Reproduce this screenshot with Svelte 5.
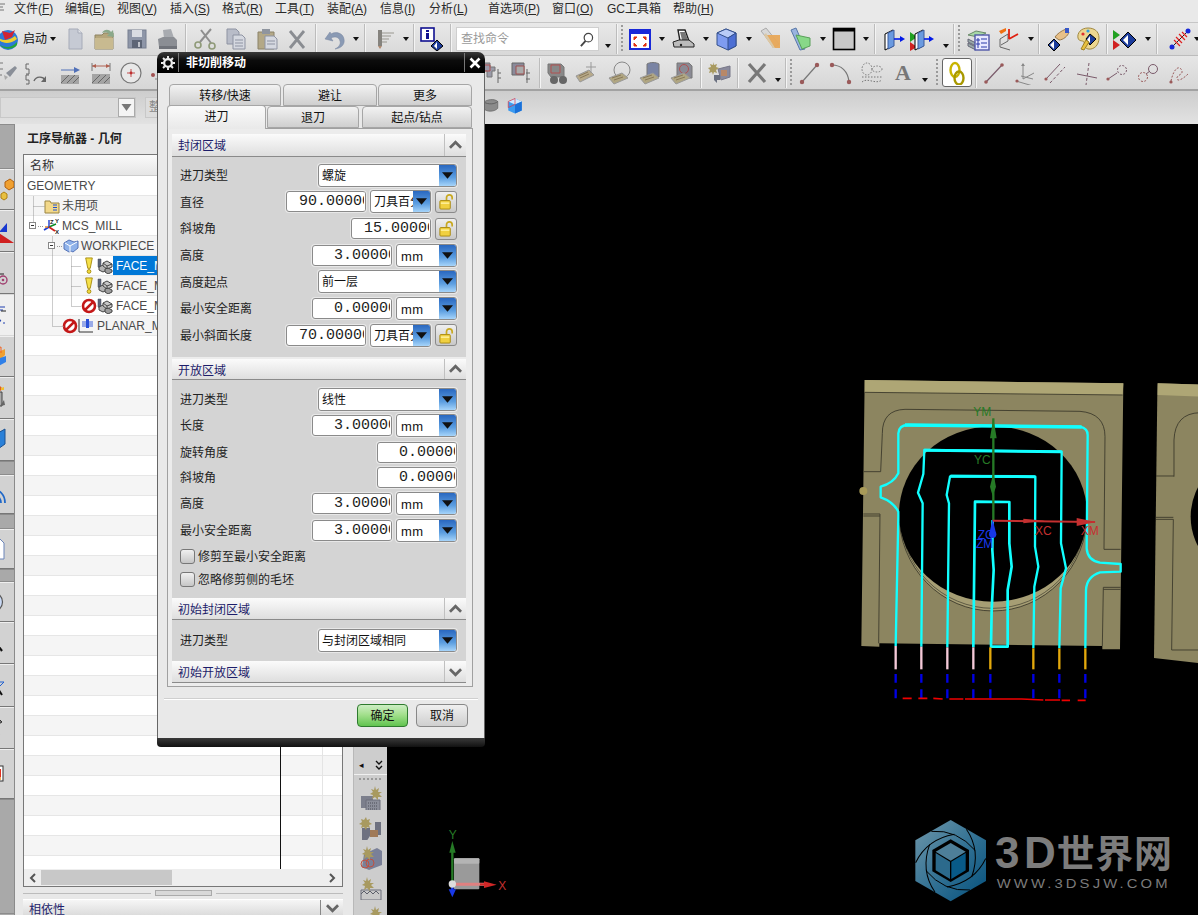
<script>
  const ICONS = {
    logo: `<circle cx="12" cy="13" r="10" fill="#2b78d8"/><path d="M4 18c5 3 12 3 17-3v3c-4 5-13 5-17 0z" fill="#25a53a"/><path d="M6 4l8 2 5-3-3 7-7 3z" fill="#d02434"/><path d="M3 11c4 3 10 3 16-2l2 3c-6 5-14 5-18 1z" fill="#efd030"/>`,
    doc: `<path d="M6 2h9l4 4v16H6z" fill="#c6cad4" stroke="#a6abb8"/><path d="M15 2v4h4" fill="#e2e4ea" stroke="#a6abb8"/>`,
    folder: `<path d="M2 8h7l2-2h9v16H2z" fill="#b5a67c" stroke="#8e8360"/><path d="M2 11h18v11H2z" fill="#c8ba90"/><path d="M9 6c2-4 7-4 9-1l2-2 1 7-7-1 2-2c-2-2-4-2-7-1z" fill="#8aa88a"/>`,
    save: `<rect x="4" y="3" width="18" height="18" fill="#8e96a8" stroke="#777f90"/><rect x="8" y="3" width="10" height="7" fill="#d9dce2"/><rect x="8" y="13" width="10" height="8" fill="#5d6576"/><rect x="14" y="15" width="2" height="5" fill="#c0c4cc"/>`,
    print: `<path d="M8 3l8-1 3 9H9z" fill="#a8abb0"/><path d="M3 12l5-2h11l3 3v7H4z" fill="#8b8e94"/><path d="M4 19h18v3H4z" fill="#70737a"/>`,
    scissors: `<path d="M19 2L8 15M9 3l10 13" stroke="#8e8e8e" stroke-width="2" fill="none"/><circle cx="6" cy="18" r="3" fill="none" stroke="#8f9a78" stroke-width="1.6"/><circle cx="20" cy="19" r="3" fill="none" stroke="#8f9a78" stroke-width="1.6"/>`,
    copy: `<path d="M4 2h9l3 3v12H4z" fill="#b8bcc8" stroke="#8e93a2"/><path d="M10 8h9l3 3v11H10z" fill="#d5d8e0" stroke="#8e93a2"/><path d="M12 13h8M12 16h8M12 19h8" stroke="#8e93a2"/>`,
    paste: `<path d="M3 5h16v17H3z" fill="#b3a887" stroke="#8b8268"/><rect x="7" y="2" width="8" height="5" fill="#8f959f"/><path d="M10 9h9l3 3v10H10z" fill="#d5d8e0" stroke="#8e93a2"/><path d="M12 14h8M12 17h8" stroke="#8e93a2"/>`,
    xmark: `<path d="M5 4l14 17M19 4L5 21" stroke="#8a8d92" stroke-width="2.8" fill="none"/>`,
    undo: `<path d="M8 5L3 12l8 2-2-3c4-2 8-1 9 3 1 3-1 6-5 8 7-1 10-5 9-10-1-6-8-8-13-5z" fill="#8a9ab4" stroke="#76859e" stroke-width=".5"/>`,
    filter: `<path d="M6 3h4v16H6z" fill="#85837e"/><path d="M10 6h12M10 9l9 0M10 12h7M10 15h5" stroke="#9a9890" stroke-width="1.2"/><path d="M6 19l2 3 2-3z" fill="#b08a70"/>`,
    info: `<rect x="1" y="1" width="13" height="13" fill="#fff" stroke="#101090" stroke-width="1.6"/><path d="M6 3h3v2H6zM6 6h3v6H6z" fill="#101090"/><path d="M17 13l6 6-6 5-6-5z" fill="#1c3c9c" stroke="#000"/><path d="M17 15v7l-3-3z" fill="#fff"/>`,
    fit: `<rect x="2" y="3" width="20" height="19" fill="#fff" stroke="#1828d8" stroke-width="2"/><rect x="2" y="3" width="20" height="4" fill="#1828d8"/><path d="M6 10h3l-3 3zM18 10h-3l3 3zM6 19h3l-3-3zM18 19h-3l3-3z" fill="#e03010" stroke="#e03010"/>`,
    scan: `<path d="M7 3h7l4 11H9z" fill="#fff" stroke="#222" stroke-width="1.4"/><path d="M9 5h5l3 8H11z" fill="#777"/><path d="M2 15l6-2h10l5 4v3H3z" fill="#bbb" stroke="#222"/><circle cx="10" cy="18" r="1.2" fill="#222"/>`,
    cube: `<path d="M12 2l10 4v13l-8 4-11-5V6z" fill="#7f9cf0" stroke="#34508c"/><path d="M3 6l11 5 8-5-10-4z" fill="#b9cbf7" stroke="#34508c"/><path d="M14 11v12l8-4V6z" fill="#4d6fd4" stroke="#34508c"/>`,
    planeO: `<path d="M3 4l5-3 13 16-5 3z" fill="#d8d8d8" stroke="#aaa"/><path d="M6 8h16v13H15z" fill="#e8a858" opacity=".95"/><path d="M6 8l9 13h2L8 6z" fill="#d9c8a8"/>`,
    planeG: `<path d="M2 3l5-2 9 21-5 1z" fill="#9ab4e0" stroke="#5878a8"/><path d="M7 8l14 3v8l-8 3z" fill="#88d888" stroke="#58a058"/>`,
    blackrect: `<rect x="1.5" y="1.5" width="21" height="21" fill="#c8c8c8" stroke="#000" stroke-width="1.6"/><rect x="1.5" y="1.5" width="21" height="3" fill="#000"/>`,
    panelB: `<path d="M3 7l8-4v16l-8 4z" fill="#fff" stroke="#000"/><path d="M6 6l6-3v16l-6 3z" fill="#6a9ae0" stroke="#3a5a9a"/><path d="M12 12h9" stroke="#0018e8" stroke-width="1.6"/><path d="M18 9l5 3-5 3z" fill="#0018e8"/>`,
    panelT: `<path d="M0 5l7 5-7 5z" fill="#20a020"/><path d="M0 15l7 5-7 4z" fill="#d02020"/><path d="M5 7l8-4v16l-8 4z" fill="#fff" stroke="#000"/><path d="M8 6l6-3v16l-6 3z" fill="#6a9ae0" stroke="#3a5a9a"/><path d="M14 12h7" stroke="#0018e8" stroke-width="1.6"/><path d="M19 9l5 3-5 3z" fill="#0018e8"/>`,
    stack: `<path d="M2 8l8-4 10 2-8 4z" fill="#a8d8a8" stroke="#6a8a6a"/><path d="M2 12v3l8 4v-3zM2 16v3l8 4v-3z" fill="#9aa" stroke="#667"/><rect x="9" y="8" width="14" height="15" fill="#e8e8ff" stroke="#5058a8" stroke-width="1.4"/><path d="M11 12h2v2h-2zM15 12h6M11 16h2v2h-2zM15 16h6M11 20h2M15 20h6" stroke="#2838a8" fill="none"/>`,
    wcs: `<path d="M12 7l-8 5 0 8M12 7v7l-7 4" stroke="#666" fill="none"/><path d="M4 20l10 3" stroke="#666"/><path d="M13 12V2M13 12l9-5" stroke="#e02010" stroke-width="1.8" fill="none"/><path d="M3 4l7-3v3l-5 3z" fill="#f07010"/>`,
    hand: `<path d="M9 10c2-3 6-6 11-8l3 3c-1 4-6 8-10 8z" fill="#e8c088" stroke="#98784a"/><rect x="19" y="1" width="4" height="5" fill="#3858c8"/><path d="M8 12l6 6-6 6-6-6z" fill="#1c3c9c" stroke="#000"/><path d="M8 14v8l-4-4z" fill="#fff"/>`,
    palette: `<path d="M12 1C5 1 1 6 2 11c1 4 5 2 6 4 1 3 0 6 4 7 6 1 11-4 11-11S18 1 12 1z" fill="#ecd690" stroke="#a08840"/><circle cx="7" cy="7" r="1.6" fill="#e03030"/><circle cx="12" cy="4" r="1.6" fill="#30a0e0"/><path d="M14 7l6 5-6 6-4-6z" fill="#1c3c9c" stroke="#000"/><path d="M14 9v7l-3-3z" fill="#fff"/><path d="M5 22l5-9 3 2-5 8z" fill="#e8c040" stroke="#a08020"/>`,
    tridiam: `<path d="M0 3l7 5-7 5z" fill="#20a020"/><path d="M0 13l7 5-7 5z" fill="#d02020"/><path d="M15 5l8 8-8 8-8-8z" fill="#1c3c9c" stroke="#000"/><path d="M15 8v10l-5-5z" fill="#fff"/>`,
    hatch: `<path d="M3 21L21 3" stroke="#222"/><path d="M8 10l6 6M11 7l6 6M6 13l6 6M14 5l5 5" stroke="#e02020" stroke-width="1.2"/><circle cx="4" cy="20" r="2.5" fill="#1828d8"/><circle cx="20" cy="4" r="2.5" fill="#1828d8"/>`,
    sk0: `<path d="M1 2h6M1 8h6M1 14h5" stroke="#777" fill="none"/><path d="M10 12l9-7 2 2-7 9z" fill="#8a8f98"/><path d="M8 14l4 2-3 3z" fill="#aaa"/>`,
    sk1: `<path d="M4 3H1v5h3v5H1M4 14H1v5h3v4H1" stroke="#666" fill="none"/><path d="M9 20c2-5 9-5 11-1" stroke="#666" fill="none" stroke-width="1.4"/><path d="M21 15v6h-5z" fill="#666"/>`,
    hatchA: `<path d="M3 14h18v9H3z" fill="#a4a4a4"/><path d="M3 22l8-8M9 22l8-8M15 22l6-6" stroke="#666"/><path d="M3 9h14" stroke="#5070b8"/><path d="M16 6l6 3-6 3z" fill="#5070b8"/>`,
    hatchD: `<path d="M3 13h18v10H3z" fill="#a4a4a4"/><path d="M3 22l8-8M9 22l8-8M15 22l6-6" stroke="#666"/><path d="M3 5h18" stroke="#b06050"/><path d="M3 2v8M21 2v8" stroke="#777"/><path d="M3 5l4-2v4zM21 5l-4-2v4z" fill="#b06050"/>`,
    circleD: `<circle cx="12" cy="12" r="10" fill="#e8e8e8" stroke="#777" stroke-width="1.2"/><path d="M12 8v8M8 12h8" stroke="#c05050"/><circle cx="12" cy="12" r="1.4" fill="#c03030"/>`,
    redDot: `<circle cx="6" cy="14" r="2" fill="#a05050"/><path d="M8 18h8" stroke="#888"/>`,
    boxT: `<path d="M3 2h8v4h5v4h-3v6H8v-6H3z" fill="#9a9aa8" stroke="#777"/><path d="M5 4h6v6H5z" fill="none" stroke="#b05050"/><path d="M19 12h3M19 17h3M19 8v14" stroke="#666"/>`,
    box2: `<path d="M4 2h12v12H4z" fill="#8a8a9a" stroke="#666"/><path d="M8 5h8v8H8z" fill="#aaa" stroke="#a05050"/><path d="M18 12h4M18 18h4M19 8v14" stroke="#666"/>`,
    binoc: `<path d="M3 3h13l3 3v10H6L3 12z" fill="#888" stroke="#777"/><path d="M6 4h9v8H6z" fill="none" stroke="#b05050"/><circle cx="9" cy="19" r="4" fill="#666"/><circle cx="18" cy="19" r="4" fill="#666"/>`,
    plusTag: `<path d="M3 15l13-6 5 5-14 7z" fill="#b8aa8a" stroke="#999"/><path d="M6 15l9-4M7 17l9-4" stroke="#8a7a5a"/><path d="M18 1v11M13 6h10" stroke="#999"/>`,
    circTag: `<circle cx="15" cy="9" r="8" fill="none" stroke="#888"/><path d="M2 17l13-5 6 5-14 6z" fill="#b0a682" stroke="#999"/><path d="M5 17l9-3M7 19l9-3" stroke="#8a7a5a"/>`,
    cylTag: `<path d="M9 3c3-2 9-2 12 0v13H9z" fill="#7a84a4" stroke="#777"/><path d="M2 17l13-5 6 5-14 6z" fill="#b0a682" stroke="#999"/><path d="M5 17l9-3M7 19l9-3" stroke="#8a7a5a"/>`,
    boxTag: `<path d="M8 2h12l3 3v12H8z" fill="#8a8a94" stroke="#777"/><circle cx="15" cy="8" r="4.5" fill="none" stroke="#b05050"/><path d="M2 17l13-5 6 5-14 6z" fill="#b0a682" stroke="#999"/><path d="M5 17l9-3M7 19l9-3" stroke="#8a7a5a"/>`,
    star: `<path d="M10 8l12-3v11l-9 3z" fill="#8a8a9c" stroke="#778"/><rect x="13" y="9" width="6" height="6" fill="#b88868"/><path d="M5 1l1 3 3-1-1 3 3 1-3 2 1 3-3-1-1 3-1-3-3 1 1-3-2-2 3-1-1-3 3 1z" fill="#a89a60"/><path d="M6 14h6v5H9v3L6 19z" fill="#6a7080"/>`,
    xgray: `<path d="M4 3l16 18M20 3L4 21" stroke="#787878" stroke-width="3.2" fill="none"/>`,
    line: `<path d="M4 21L19 4" stroke="#777" stroke-width="1.2"/><circle cx="4" cy="21" r="2.2" fill="#9a5a5a"/><circle cx="19" cy="4" r="2.2" fill="#9a5a5a"/>`,
    arc: `<path d="M3 4c9 0 16 6 17 17" stroke="#777" stroke-width="1.2" fill="none"/><circle cx="3" cy="4" r="2.2" fill="#9a5a5a"/><circle cx="20" cy="21" r="2.2" fill="#9a5a5a"/>`,
    shapes: `<ellipse cx="7" cy="8" rx="5" ry="6" fill="none" stroke="#777" stroke-dasharray="1.5 1.5"/><ellipse cx="17" cy="8" rx="5" ry="3" fill="none" stroke="#777" stroke-dasharray="1.5 1.5"/><path d="M2 16h20M2 21c6-5 13 3 20-2" stroke="#777" stroke-dasharray="1.5 1.5" fill="none"/>`,
    link: `<ellipse cx="10" cy="9" rx="4.5" ry="7" fill="none" stroke="#c8b400" stroke-width="2.4"/><ellipse cx="14" cy="17" rx="4.5" ry="6.5" fill="none" stroke="#a89800" stroke-width="2.4"/>`,
    l1: `<path d="M4 21L20 4" stroke="#7a5a6a" stroke-width="1.2"/><circle cx="4" cy="21" r="1.8" fill="#9a5a5a"/><circle cx="20" cy="4" r="1.8" fill="#9a5a5a"/>`,
    axes: `<path d="M10 18V3M10 18l11-6M3 20l17 5M8 15l12 3" stroke="#888" fill="none"/><path d="M8 5l2-3 2 3z" fill="#888"/><circle cx="4" cy="20" r="1.6" fill="#9a5a5a"/>`,
    dbl: `<path d="M3 18L17 3" stroke="#7a5a6a"/><path d="M7 22L22 6" stroke="#7a5a6a" stroke-dasharray="3 2"/><circle cx="3" cy="18" r="1.6" fill="#9a5a5a"/>`,
    cross: `<path d="M2 13l20 4" stroke="#7a5a6a"/><path d="M14 2l-3 22" stroke="#7a5a6a" stroke-dasharray="3 2"/>`,
    lc: `<path d="M3 18l9-6" stroke="#7a5a6a"/><circle cx="3" cy="18" r="1.6" fill="#9a5a5a"/><circle cx="17" cy="9" r="4.5" fill="none" stroke="#7a5a6a" stroke-dasharray="2 1.5"/>`,
    cc: `<circle cx="7" cy="16" r="4.5" fill="none" stroke="#9a5a5a" stroke-dasharray="2 1.5"/><circle cx="17" cy="8" r="4.5" fill="none" stroke="#7a5a6a"/><path d="M10 13l4-3" stroke="#7a5a6a"/>`,
    sc: `<path d="M4 20c3-14 9-16 11-10 1 4-6 4-5 8 1 3 7-1 11-5" fill="none" stroke="#9a5a5a" stroke-dasharray="2 1.5"/><circle cx="4" cy="21" r="1.6" fill="#9a5a5a"/>`,
    gray3d: `<path d="M3 7c3-4 14-5 18-1v9c-4 5-15 5-18 1z" fill="#8b8b8b" stroke="#666"/><path d="M3 7c5 3 14 3 18-1" fill="none" stroke="#555"/>`,
    blueCube: `<path d="M3 6l9-4 9 4v12l-9 4-9-4z" fill="#3a9af0"/><path d="M3 6l9 4 9-4-9-4z" fill="#cfe8ff"/><path d="M12 10v12l9-4V6z" fill="#1a70d8"/><path d="M3 6l9-4v8l-9 4z" fill="none" stroke="#e03040" stroke-width=".9"/>`,
    rCube: `<path d="M14 4l5-3 4 3v5l-5 3-4-3z" fill="#f0a030" stroke="#b06010"/><path d="M10 16l3-2 3 2v4l-3 2-3-2z" fill="#e8c040" stroke="#b08010"/><path d="M0 22h8" stroke="#222"/>`,
    rTri: `<path d="M16 4L8 13h8z" fill="#1838d0"/><path d="M8 14l15 10H8z" fill="#d02020"/>`,
    rMag: `<path d="M0 2h3v12H0z" fill="#a03060"/><circle cx="12" cy="19" r="4" fill="none" stroke="#a04070" stroke-width="1.4"/><circle cx="12" cy="19" r="1.3" fill="#a04070"/><path d="M5 13h8" stroke="#222"/>`,
    rLines: `<path d="M5 4h9M3 7h9" stroke="#2040b0"/><path d="M6 13l4 5H5zM12 20h2" stroke="#2040b0" fill="none"/><path d="M10 8h5" stroke="#222"/>`,
    rOrange: `<path d="M0 10l14-6v6L0 24z" fill="#f0a030"/><path d="M0 16l15-5v6L2 24z" fill="#3080e8"/><path d="M0 5l10-3v6" fill="none" stroke="#f06020"/>`,
    rTool: `<path d="M3 6h8v14H3z" fill="#aaa" stroke="#444"/><path d="M9 20l4-6 1 5z" fill="#666"/><path d="M5 2l4-2 3 3-3 2z" fill="#e06020"/><path d="M10 2l3-1v3h-3z" fill="#f0c030"/>`,
    rBook: `<path d="M0 4h3v16H0z" fill="#28a028"/><path d="M4 4h3v16H4z" fill="#e8c030"/><path d="M7 5l7-4v15l-7 5z" fill="#2a80d8" stroke="#1a5090"/>`,
    rWifi: `<path d="M0 19c3 0 6-2 6-6M0 11c6 0 10 4 10 9M0 6c9 0 14 6 14 14" fill="none" stroke="#2068c8" stroke-width="1.8"/><circle cx="0" cy="19" r="5" fill="#1878e0"/>`,
    rGlobe: `<path d="M0 1h8l5 5v16H0z" fill="#fff" stroke="#6a84b8"/><circle cx="4" cy="15" r="4.5" fill="#30a060"/><path d="M1 12h5v3H2z" fill="#1878c8"/>`,
    rClock: `<circle cx="2" cy="12" r="9.5" fill="#c8d8f4" stroke="#555" stroke-width="1.2"/><path d="M2 6v6h5" stroke="#000" stroke-width="1.4" fill="none"/>`,
    rWand: `<path d="M3 9l8 11" stroke="#111" stroke-width="2.2"/><circle cx="2" cy="7" r="2.4" fill="#fff"/>`,
    rWand2: `<path d="M2 8h11l-4 4" stroke="#2060d0" fill="none"/><path d="M4 10l7 11" stroke="#111" stroke-width="2"/><circle cx="2" cy="8" r="2.4" fill="#fff"/>`,
    rHammer: `<path d="M0 6l9-2 2 2-5 3 1 8c2 1 2 3 0 3l-7 0" fill="#777" stroke="#333"/>`,
    rRed: `<rect x="-2" y="4" width="14" height="15" fill="#fff" stroke="#333"/><path d="M0 7h10v9H0z" fill="#e03020"/><path d="M3 7h4v7H3z" fill="#4090e0"/><path d="M0 15h10v3H0z" fill="#f0b060"/>`,
    rGear: `<circle cx="2" cy="11" r="5" fill="none" stroke="#222" stroke-width="2.5"/>`,
    sNoise: `<path d="M2 10h12v12H2z" fill="#7c7f8c"/><path d="M7 14h14v11H7z" fill="#8b8e9a" stroke="#6c6f7a"/><path d="M9 17h10M9 20h10M9 23h10" stroke="#4c4f58" stroke-dasharray="1 1"/><path d="M16 0l1 4 3-2-1 4 4 0-3 2 3 3-4 0 0 3-3-3-3 2 1-4-3-1 3-2-2-3 3 1z" fill="#a89a60"/>`,
    sTool: `<path d="M16 6h6v13h-6z" fill="#6e7180"/><rect x="11" y="14" width="8" height="7" fill="#a07a58"/><path d="M3 12h8v8l-4 6H3z" fill="#6e7180"/><path d="M7 1l1 3 3-1-1 3 3 2-3 1 1 3-3-1-1 3-2-3-3 1 1-3-3-1 3-2-1-3 3 1z" fill="#a89a60"/>`,
    sBlock: `<path d="M5 8l13-6 5 3v14l-13 5-7-3z" fill="#7a8098"/><circle cx="6" cy="18" r="4" fill="none" stroke="#c05040"/><circle cx="11" cy="17" r="4" fill="none" stroke="#c05040"/><path d="M8 0l1 4 3-2-1 4 4 0-3 2 3 3-4 0 0 3-3-3-3 2 1-4-3-1 3-2-2-3 3 1z" fill="#a89a60"/>`,
    sWave: `<path d="M2 14h20v10H2z" fill="#c8c8c8" stroke="#6c6f7a"/><path d="M2 18l3-3 3 3 3-3 3 3 3-3 3 3" stroke="#5c5f6a" fill="none"/><path d="M8 1l1 4 3-2-1 4 4 0-3 2 3 3-4 0 0 3-3-3-3 2 1-4-3-1 3-2-2-3 3 1z" fill="#a89a60"/>`
  };

  const WIDTH = { a: 8, a2: 8, s: 2, g: 2, txt: 24, search: 143, linkbtn: 30, A: 20 };

  function flow(items) {
    let end = 0;
    return items.map(([name, center, label]) => {
      const w = WIDTH[name] ?? 24;
      const gap = center - w / 2 - end;
      end = center + w / 2;
      return { name, w, gap, label };
    });
  }

  const toolbarOne = flow([
    ['logo', 8], ['txt', 35, '启动'], ['a', 53], ['doc', 75], ['folder', 105], ['save', 136], ['print', 167], ['s', 186],
    ['scissors', 204], ['copy', 235], ['paste', 267], ['xmark', 297], ['s', 316], ['undo', 334], ['a', 356], ['s', 365],
    ['filter', 384], ['a', 406], ['s', 414], ['info', 432], ['s', 451], ['search', 527.5], ['a2', 608], ['s', 617], ['g', 622],
    ['fit', 640], ['a', 662], ['scan', 683], ['a', 706], ['cube', 726], ['a', 749], ['planeO', 770], ['planeG', 801], ['a', 823],
    ['blackrect', 844], ['a', 866], ['s', 875], ['panelB', 894], ['panelT', 922], ['a2', 946], ['s', 954], ['g', 959],
    ['stack', 978], ['wcs', 1008], ['a', 1031], ['s', 1039], ['hand', 1058], ['palette', 1088], ['s', 1107], ['tridiam', 1125],
    ['a', 1148], ['s', 1157], ['hatch', 1180], ['a', 1197]
  ]);

  const toolbarTwo = flow([
    ['sk0', 8], ['sk1', 37], ['hatchA', 70], ['hatchD', 101], ['circleD', 131], ['redDot', 159],
    ['boxT', 491], ['box2', 520], ['s', 540], ['binoc', 557], ['plusTag', 585],
    ['circTag', 619], ['cylTag', 650], ['boxTag', 681], ['s', 701], ['star', 720], ['s', 738], ['xgray', 757], ['a2', 778],
    ['s', 786], ['g', 791], ['line', 810], ['arc', 841], ['shapes', 872], ['A', 903], ['a2', 925], ['g', 937],
    ['linkbtn', 957], ['s', 976], ['l1', 994], ['axes', 1025], ['dbl', 1055], ['cross', 1087], ['lc', 1117], ['cc', 1148], ['sc', 1179]
  ]);

  const menuRaw = [
    ['文件', 'F', 14], ['编辑', 'E', 65], ['视图', 'V', 117], ['插入', 'S', 170], ['格式', 'R', 222], ['工具', 'T', 275], ['装配', 'A', 327],
    ['信息', 'I', 380], ['分析', 'L', 429], ['首选项', 'P', 488], ['窗口', 'O', 552], ['GC工具箱', '', 607], ['帮助', 'H', 673]
  ];
  const menus = menuRaw.map((m, i) => ({ name: m[0], key: m[1], w: (menuRaw[i + 1]?.[2] ?? 720) - m[2] }));

  const railCells = [
    { h: 45, icon: 'rGear', tone: 'dark' }, { h: 41, icon: 'rCube' }, { h: 42, icon: 'rTri' }, { h: 42, icon: 'rMag' },
    { h: 42, icon: 'rLines', tone: 'pale' }, { h: 41, icon: 'rOrange' }, { h: 42, icon: 'rTool' }, { h: 42, icon: 'rBook' },
    { h: 14, tone: 'dark' }, { h: 39, icon: 'rWifi' }, { h: 15, tone: 'dark' }, { h: 40, icon: 'rGlobe' }, { h: 13, tone: 'dark' },
    { h: 40, icon: 'rClock' }, { h: 42, icon: 'rWand' }, { h: 43, icon: 'rWand2' }, { h: 42, icon: 'rHammer' }, { h: 50, icon: 'rRed' },
    { h: 115, tone: 'dark' }
  ];

  const treeRows = [
    { text: 'GEOMETRY', indent: 0 },
    { text: '未用项', indent: 20, icon: 'folder', gap: 2 },
    { text: 'MCS_MILL', indent: 19, icon: 'mcs' },
    { text: 'WORKPIECE', indent: 39, icon: 'wp', gap: 2 },
    { text: 'FACE_MILLING', indent: 57, state: 'warn', icon: 'op', selected: true },
    { text: 'FACE_MILLING_1', indent: 57, state: 'warn', icon: 'op' },
    { text: 'FACE_MILLING_2', indent: 57, state: 'no', icon: 'op' },
    { text: 'PLANAR_MILL', indent: 38, state: 'no', icon: 'plan' }
  ];
  const emptyRows = Array.from({ length: 27 }, (_, i) => i);

  const sections = [
    {
      title: '封闭区域', open: true, cls: 'first',
      rows: [
        { label: '进刀类型', combo: '螺旋', kind: 'wide', h: 'r267' },
        { label: '直径', input: '90.00000', w: 'w80', unit: '刀具百分比', uw: 'u61', lock: true, h: 'r267' },
        { label: '斜坡角', input: '15.00000', w: 'w80', lock: true, h: 'r267' },
        { label: '高度', input: '3.00000', w: 'w80', unit: 'mm', uw: 'u61', h: 'r267' },
        { label: '高度起点', combo: '前一层', kind: 'wide', h: 'r267' },
        { label: '最小安全距离', input: '0.00000', w: 'w80', unit: 'mm', uw: 'u61', h: 'r267' },
        { label: '最小斜面长度', input: '70.00000', w: 'w80', unit: '刀具百分比', uw: 'u61', lock: true, h: 'r267' }
      ]
    },
    {
      title: '开放区域', open: true, cls: 'second',
      rows: [
        { label: '进刀类型', combo: '线性', kind: 'wide', h: 'r26' },
        { label: '长度', input: '3.00000', w: 'w80', unit: 'mm', uw: 'u61', h: 'r27' },
        { label: '旋转角度', input: '0.00000', w: 'w80', h: 'r26' },
        { label: '斜坡角', input: '0.00000', w: 'w80', h: 'r25' },
        { label: '高度', input: '3.00000', w: 'w80', unit: 'mm', uw: 'u61', h: 'r26' },
        { label: '最小安全距离', input: '3.00000', w: 'w80', unit: 'mm', uw: 'u61', h: 'r29' },
        { check: '修剪至最小安全距离', h: 'r23' },
        { check: '忽略修剪侧的毛坯', h: 'r23' }
      ]
    },
    {
      title: '初始封闭区域', open: true, cls: 'third',
      rows: [{ label: '进刀类型', combo: '与封闭区域相同', kind: 'wide', h: 'r26' }]
    },
    { title: '初始开放区域', open: false, cls: 'fourth', rows: [] }
  ];

  const blades = [0, 60, 120, 180, 240, 300];
  const dashColumns = [
    { x: 137, y1: 828, c: '#f4c9d8' }, { x: 214, y1: 830, c: '#f4c9d8' }, { x: 292, y1: 832, c: '#f4c9d8' }, { x: 370, y1: 832, c: '#f4c9d8' },
    { x: 421, y1: 832, c: '#e3a80c' }, { x: 550, y1: 835, c: '#e3a80c' }, { x: 628, y1: 835, c: '#e3a80c' }, { x: 706, y1: 835, c: '#e3a80c' }
  ];
</script>

{#snippet icon(name, cls = 'ico')}
  <svg class={cls} viewBox="0 0 24 24" aria-hidden="true">{@html ICONS[name]}</svg>
{/snippet}

{#snippet toolbarItems(items)}
  {#each items as it}
    <span class="slot" style:width="{it.w}px" style:margin-left="{it.gap}px">
      {#if it.name === 'a' || it.name === 'a2'}
        <i class="caret" class:low={it.name === 'a2'}></i>
      {:else if it.name === 's'}
        <i class="tsep"></i>
      {:else if it.name === 'g'}
        <i class="tgrip"></i>
      {:else if it.name === 'txt'}
        <span class="tbtext">{it.label}</span>
      {:else if it.name === 'search'}
        <span class="search">
          <span class="search-text">查找命令</span>
          <svg class="mag" viewBox="0 0 16 16"><circle cx="10" cy="6" r="4.5" fill="#fff" stroke="#444" stroke-width="1.3"/><path d="M7 9.5L2 15" stroke="#444" stroke-width="2"/></svg>
        </span>
      {:else if it.name === 'A'}
        <span class="bigA">A</span>
      {:else if it.name === 'linkbtn'}
        <span class="linkbtn">{@render icon('link')}</span>
      {:else}
        {@render icon(it.name)}
      {/if}
    </span>
  {/each}
{/snippet}

{#snippet dropBtn()}
  <span class="drop"><svg viewBox="0 0 12 7" class="drop-tri"><path d="M0 0h12L6 7z" fill="#111"/></svg></span>
{/snippet}

{#snippet chevron(up)}
  <svg class="chev" viewBox="0 0 14 10"><path d={up ? 'M1 8l6-6 6 6' : 'M1 2l6 6 6-6'} fill="none" stroke="#666" stroke-width="3"/></svg>
{/snippet}

<div class="app">
  <nav class="menubar">
    <svg class="menu-ico" viewBox="0 0 6 12"><path d="M0 3h5M0 6h3M0 9h4" stroke="#777"/></svg>
    {#each menus as m}
      <span class="menu" style:width="{m.w}px">{m.name}{#if m.key}(<u>{m.key}</u>){/if}</span>
    {/each}
  </nav>

  <div class="toolbar tb1">{@render toolbarItems(toolbarOne)}</div>
  <div class="toolbar tb2">{@render toolbarItems(toolbarTwo)}</div>
  <div class="toolbar tb3">
    <span class="filter-combo"><span class="filter-btn"><svg viewBox="0 0 10 7" class="drop-tri"><path d="M0 0h10L5 7z" fill="#777"/></svg></span></span>
    <span class="filter-combo second"><span class="filter-label">整个装配</span></span>
    <span class="tb3-icons">{@render icon('gray3d', 'ico small')}{@render icon('blueCube', 'ico small')}</span>
  </div>

  <main class="workspace">
    <aside class="rail">
      {#each railCells as c}
        <div class="rail-cell {c.tone ?? ''}" style:height="{c.h}px">
          {#if c.icon}{@render icon(c.icon, 'rail-ico')}{/if}
        </div>
      {/each}
    </aside>

    <section class="panel">
      <h2 class="panel-title">工序导航器 - 几何</h2>
      <div class="table">
        <div class="thead">名称</div>
        <div class="tbody">
          {#each treeRows as r}
            <div class="trow" style:padding-left="{r.indent}px">
              {#if r.state === 'warn'}
                <svg class="ti s10" viewBox="0 0 10 18"><path d="M1.5 1h7L6.3 12H3.7z" fill="#f5e04a" stroke="#a88c10"/><circle cx="5" cy="15.3" r="2" fill="#f3dc3c" stroke="#a88c10"/></svg>
              {:else if r.state === 'no'}
                <svg class="ti s16" viewBox="0 0 16 16"><circle cx="8" cy="8" r="6" fill="#fff" stroke="#c41818" stroke-width="2.6"/><path d="M3.8 12.2l8.4-8.4" stroke="#c41818" stroke-width="2.6"/></svg>
              {/if}
              {#if r.icon === 'folder'}
                <svg class="ti s16" viewBox="0 0 16 16"><path d="M1 3h5l1 2h8v10H1z" fill="#f2d88a" stroke="#9a8440"/><path d="M9 7h4M9 9.5h4M9 12h4" stroke="#2050d0"/></svg>
              {:else if r.icon === 'mcs'}
                <svg class="ti s16" viewBox="0 0 16 16"><path d="M6 9V2" stroke="#1c3cd0" stroke-width="1.4"/><path d="M6 9l7-3" stroke="#0a8a20" stroke-width="1.4"/><path d="M6 9L1 12" stroke="#1c3cd0" stroke-width="1.8"/><path d="M6 9l6 4" stroke="#d02020" stroke-width="1.8"/><path d="M2 9h3" stroke="#e08020" stroke-width="1.4"/><text x="7" y="6" class="mini">Z</text><text x="12" y="5" class="mini">Y</text><text x="12" y="16" class="mini">X</text></svg>
              {:else if r.icon === 'wp'}
                <svg class="ti s16" viewBox="0 0 16 16"><path d="M1 5l5-3 5 2 4-1v7l-5 4-2-1-2 1-5-3z" fill="#8fb2ea" stroke="#5674b8"/><path d="M2 5l5 3 7-4M7 8v6" fill="none" stroke="#fff"/></svg>
              {:else if r.icon === 'op'}
                <svg class="ti s16" viewBox="0 0 16 16"><path d="M1 1h3v7l-1 2-2-1z" fill="#5c6478" stroke="#444a58" stroke-width=".5"/><path d="M2 9l4-2 4 2v3l-4 2-4-2z" fill="#b4b4b4" stroke="#444"/><path d="M6 5l4-2 5 3v3l-5 2-4-3z" fill="#c8c8c8" stroke="#444"/><path d="M8 11l3-1 4 2v2l-4 2-3-2z" fill="#9c9c9c" stroke="#444"/><path d="M6 5l4 3 5-2M10 8v3" fill="none" stroke="#444"/></svg>
              {:else if r.icon === 'plan'}
                <svg class="ti s16" viewBox="0 0 16 16"><path d="M1 1v13h14" fill="none" stroke="#333"/><path d="M8 1h3v9H8z" fill="#2a50d8"/><path d="M4 6h11M4 8h11M4 4h11" stroke="#2a50d8" stroke-width=".9"/></svg>
              {/if}
              <span class="ttext" class:sel={r.selected} class:tight={r.gap}>{r.text}</span>
            </div>
          {/each}
          {#each emptyRows as n}<div class="trow"></div>{/each}
          <i class="vline"></i>
          <i class="colline"></i>
          <svg class="tree-lines" width="100" height="160">
            <path d="M9.5 20.5v30M9.5 30.5h11M14 50.5h6M28.5 60.5v90M28.5 150.5h11M33 70.5h6M47.5 80.5v50M47.5 90.5h9M47.5 110.5h9M47.5 130.5h9" fill="none" stroke="#999" stroke-dasharray="1 1"/>
          </svg>
          <span class="minus m1"></span>
          <span class="minus m2"></span>
        </div>
        <div class="hscroll">
          <svg class="sarrow" viewBox="0 0 8 10"><path d="M6 1L2 5l4 4" fill="none" stroke="#555" stroke-width="2"/></svg>
          <span class="thumb"></span>
          <svg class="sarrow end" viewBox="0 0 8 10"><path d="M2 1l4 4-4 4" fill="none" stroke="#555" stroke-width="2"/></svg>
        </div>
      </div>
      <div class="splitter"><i class="sline"></i><i class="sgrip"></i><i class="sline"></i></div>
      <div class="dep"><span class="dep-text">相依性</span><span class="dep-btn">{@render chevron(false)}</span></div>
    </section>

    <aside class="strip">
      <div class="strip-ctrl"><span class="mini-left">◂</span><svg class="dbl" viewBox="0 0 8 11"><path d="M1 1l3 3 3-3M1 6l3 3 3-3" fill="none" stroke="#111" stroke-width="1.4"/></svg></div>
      <i class="strip-grip"></i>
      {@render icon('sNoise', 'strip-ico')}
      {@render icon('sTool', 'strip-ico')}
      {@render icon('sBlock', 'strip-ico')}
      {@render icon('sWave', 'strip-ico')}
      {@render icon('sNoise', 'strip-ico')}
    </aside>

    <div class="canvas">
      <svg class="scene" viewBox="387 124 811 791" width="811" height="791">
        <defs>
          <linearGradient id="hexg" x1="0" y1="0" x2="1" y2="1">
            <stop offset="0" stop-color="#6f97aa"/><stop offset=".55" stop-color="#2f6f92"/><stop offset="1" stop-color="#04507c"/>
          </linearGradient>
        </defs>

        <!-- second part, partly out of view -->
        <g transform="translate(850 370) scale(.33333)">
          <path d="M923 40L1050 44V880L912 864L922 70z" fill="#8c8560"/>
          <path d="M923 40L1050 44V80L923 75z" fill="#aea675"/>
          <path d="M972 320V210Q975 130 1050 128M918 318H972M918 442H970M918 448H970M970 448L965 840H1050" fill="none" stroke="#3a382a" stroke-width="2.6"/>
          <circle cx="1210" cy="440" r="188" fill="#000"/>

          <!-- main part -->
          <path d="M44 30L820 40L810 838H757V828L88 820V830L34 828z" fill="#8c8560"/>
          <path d="M44 30L820 40L818 75L44 67z" fill="#aea675"/>
          <path d="M44 67L818 75M42 305H92L97 190Q97 120 165 118L690 124Q765 130 765 200L762 538H812M40 432H90M40 438H90M90 432L86 820M760 652H812M760 658H812M760 652L757 828" fill="none" stroke="#3a382a" stroke-width="2.6"/>
          <path d="M147 432A282 291 0 0 0 711 432Z" fill="#a69e74" stroke="#3a382a" stroke-width="2.6"/>
          <path d="M150 432A279 283 0 0 0 708 432" fill="none" stroke="#3a382a" stroke-width="2"/>
          <ellipse cx="429" cy="432" rx="282" ry="263" fill="#000"/>
          <circle cx="40" cy="363" r="12" fill="#a89a58"/>

          <!-- tool path -->
          <g fill="none" stroke="#1ff" stroke-linejoin="round">
            <path d="M137 828L145 440L145 425Q130 395 92 382V350Q130 340 145 310L145 190Q147 165 175 165L690 170Q713 175 713 195L710 535Q712 570 750 578L812 582V605L750 607Q710 620 708 660L706 835" stroke-width="7"/>
            <path d="M165 165L695 171" stroke-width="11"/>
            <path d="M214 830L218 400L204 368L220 312L223 240L635 245L633 520L648 595L632 655L628 835" stroke-width="7"/>
            <path d="M223 241L635 245" stroke-width="9"/>
            <path d="M292 832L297 400L290 375L300 320L302 318L556 320L555 530L565 590L553 650L550 835" stroke-width="7"/>
            <path d="M302 319L556 320" stroke-width="9"/>
            <path d="M370 832L375 395L478 396L478 520L485 590L473 660L473 830L423 830L425 720L431 600L427 540L428 450" stroke-width="8"/>
          </g>
          {#each dashColumns as d}
            <path d="M{d.x} {d.y1}V898" stroke={d.c} stroke-width="7"/>
            <path d="M{d.x} 912V938M{d.x} 958V985" stroke="#0000e6" stroke-width="7"/>
          {/each}
          <path d="M158 985H185M205 985H232M250 985L278 987M298 987H340M345 987H515L580 990M585 990H630M635 991H660M683 991H707" stroke="#f00000" stroke-width="5" fill="none"/>

          <!-- axes -->
          <path d="M430 145V452" stroke="#267a26" stroke-width="7"/>
          <path d="M430 145L420 205H440z" fill="#267a26"/>
          <path d="M430 310L420 350L428 378L438 350z" fill="#267a26"/>
          <path d="M427 452L735 456" stroke="#c43030" stroke-width="6"/>
          <path d="M680 444L738 456L680 468z" fill="#c43030"/>
          <path d="M520 446L585 452L520 460z" fill="#c43030"/>
          <path d="M428 448L418 490H438z" fill="#1838e8"/>
          <circle cx="428" cy="493" r="11" fill="#1838e8"/>
          <g class="axis-label">
            <text x="370" y="138" fill="#267a26">YM</text>
            <text x="372" y="282" fill="#267a26">YC</text>
            <text x="555" y="496" fill="#c43030">XC</text>
            <text x="692" y="496" fill="#c43030">XM</text>
            <text x="383" y="506" fill="#1838e8">ZC</text>
            <text x="378" y="533" fill="#1838e8">ZM</text>
          </g>
        </g>

        <!-- triad -->
        <g transform="translate(0 740) scale(.33333)">
          <rect x="1362" y="355" width="76" height="93" rx="3" fill="#9a9a9a"/>
          <rect x="1362" y="355" width="76" height="16" rx="3" fill="#b4b4b4"/>
          <path d="M1357 430V330" stroke="#267a26" stroke-width="7"/>
          <path d="M1357 303L1348 338H1367z" fill="#267a26"/>
          <path d="M1357 433H1455" stroke="#e08080" stroke-width="9"/>
          <path d="M1440 433H1460" stroke="#d02828" stroke-width="6"/>
          <path d="M1490 434L1452 424V444z" fill="#d02828"/>
          <path d="M1357 440V462" stroke="#1838e8" stroke-width="8"/>
          <path d="M1357 472L1346 448H1368z" fill="#1838e8"/>
          <circle cx="1357" cy="432" r="11" fill="#ddd"/>
          <text x="1346" y="298" class="triad" fill="#267a26">Y</text>
          <text x="1495" y="449" class="triad" fill="#c43030">X</text>
        </g>

        <!-- watermark -->
        <g transform="translate(900 810) scale(.33333)">
          <path d="M152 30L258 91V213L152 274L46 213V91z" fill="url(#hexg)"/>
          {#each blades as a}
            <path d="M94 64Q172 58 226 122" transform="rotate({a} 152 152)" fill="none" stroke="#000" stroke-width="3"/>
          {/each}
          <path d="M152 88L207 120V184L152 216L97 184V120z" fill="#000"/>
          <path d="M152 99L197 125L152 152L107 125z" fill="#4e7f99"/>
          <path d="M107 129L150 155V207L107 181z" fill="#2c6a8c"/>
          <path d="M197 129L154 155V207L197 181z" fill="#085a88"/>
          <text x="285" y="175" class="wm-latin" textLength="182" lengthAdjust="spacing">3D</text>
          <text x="470" y="170" class="wm-cjk" textLength="346" lengthAdjust="spacing">世界网</text>
          <text x="290" y="234" class="wm-url" textLength="522" lengthAdjust="spacingAndGlyphs">WWW.3DSJW.COM</text>
        </g>
      </svg>
    </div>
  </main>

  <div class="dialog">
    <header class="dlg-title">
      <svg class="gear" viewBox="0 0 16 16"><circle cx="8" cy="8" r="4.4" fill="none" stroke="#eee" stroke-width="2.6"/><path d="M8 0v3M8 13v3M0 8h3M13 8h3M2.3 2.3l2 2M11.7 11.7l2 2M13.7 2.3l-2 2M4.3 11.7l-2 2" stroke="#eee" stroke-width="2.2"/></svg>
      <span class="dlg-name">非切削移动</span>
      <svg class="close" viewBox="0 0 12 12"><path d="M1.5 1.5l9 9M10.5 1.5l-9 9" stroke="#fff" stroke-width="2.6"/></svg>
    </header>
    <div class="dlg-body">
      <div class="tabs back">
        <span class="tab t112">转移/快速</span>
        <span class="tab t94">避让</span>
        <span class="tab t94b">更多</span>
      </div>
      <div class="tabs front">
        <span class="tab sel t99">进刀</span>
        <span class="tab t92">退刀</span>
        <span class="tab t110">起点/钻点</span>
      </div>
      <div class="tabpanel">
        {#each sections as s}
          <div class="sec-head {s.cls}">
            <span class="sec-title">{s.title}</span>
            <span class="sec-btn">{@render chevron(s.open)}</span>
          </div>
          {#if s.rows.length}
            <div class="sec-body {s.cls}">
              {#each s.rows as r}
                <div class="row {r.h}">
                  {#if r.check}
                    <span class="check"></span><span class="lbl">{r.check}</span>
                  {:else}
                    <span class="lbl grow">{r.label}</span>
                    {#if r.combo}
                      <span class="combo wide"><span class="combo-text">{r.combo}</span>{@render dropBtn()}</span>
                    {:else}
                      <span class="num {r.w}"><span class="num-text">{r.input}</span></span>
                      {#if r.unit}
                        <span class="combo {r.uw}"><span class="combo-text" class:mm={r.unit === 'mm'}>{r.unit}</span>{@render dropBtn()}</span>
                      {/if}
                      {#if r.lock}
                        <span class="lock"><svg viewBox="0 0 18 18" class="lock-ico"><path d="M9 8V5a3 3 0 0 1 6 0v2" fill="none" stroke="#c8a820" stroke-width="1.8"/><rect x="2" y="8" width="11" height="9" rx="1" fill="#f0d040" stroke="#a88810"/><rect x="3" y="10" width="9" height="1.5" fill="#fff2a0"/></svg></span>
                      {/if}
                    {/if}
                  {/if}
                </div>
              {/each}
            </div>
          {/if}
        {/each}
      </div>
      <div class="footline"></div>
      <div class="actions">
        <span class="btn ok">确定</span>
        <span class="btn">取消</span>
      </div>
    </div>
    <div class="dlg-bottom"></div>
  </div>
</div>

<style>
  :global(body) { margin: 0; background: #000; }
  .app {
    position: relative; width: 1198px; height: 915px; overflow: hidden;
    display: flex; flex-direction: column; background: #000;
    font: 12px/1.2 "Liberation Sans", "Noto Sans CJK SC", sans-serif; color: #222;
  }

  .menubar {
    height: 23px; flex: none; display: flex; align-items: center; padding: 0 0 4px 14px;
    box-sizing: border-box; background: #e9e9e9; border-bottom: 1px solid #c6c6c6; position: relative; white-space: nowrap;
  }
  .menu { font-size: 12px; color: #2a2a2a; flex: none; }
  .menu-ico { position: absolute; left: 0; top: 1px; width: 6px; height: 12px; }

  .toolbar { flex: none; display: flex; align-items: center; overflow: hidden; box-sizing: border-box; white-space: nowrap; }
  .tb1 { height: 33px; background: linear-gradient(#e8e8e8, #d8d8d8); border-bottom: 1px solid #bcbcbc; }
  .tb2 { height: 35px; background: linear-gradient(#e6e6e6, #d6d6d6); border-bottom: 2px solid #a2a2a2; }
  .tb3 { height: 33px; background: linear-gradient(#cdcdcd, #e2e2e2); position: relative; }
  .slot { flex: none; display: flex; align-items: center; justify-content: center; height: 30px; position: relative; }
  .ico { width: 24px; height: 24px; flex: none; }
  .ico.small { width: 18px; height: 18px; }
  .caret { width: 0; height: 0; border: 3.5px solid transparent; border-top: 4px solid #111; border-bottom: 0; }
  .caret.low { margin-top: 14px; }
  .tsep { width: 1px; height: 30px; background: #bcbcbc; border-right: 1px solid #f4f4f4; }
  .tgrip { width: 2px; height: 28px; background: repeating-linear-gradient(#9a9a9a 0 2px, transparent 2px 4px); }
  .tbtext { font-size: 12px; color: #111; }
  .search {
    display: flex; align-items: center; justify-content: space-between; width: 143px; height: 24px; box-sizing: border-box;
    padding: 0 4px; background: #fff; border: 1px solid #cfcfcf; color: #9a9a9a;
  }
  .search-text { font-size: 12px; }
  .mag { width: 15px; height: 15px; }
  .bigA { font: bold 22px/1 "Liberation Serif", serif; color: #777; }
  .linkbtn {
    width: 30px; height: 29px; display: flex; align-items: center; justify-content: center; box-sizing: border-box;
    background: #fff; border: 1px solid #666; border-radius: 3px;
  }

  .filter-combo {
    width: 136px; height: 21px; box-sizing: border-box; background: #dcdcdc; border: 1px solid #c8c8c8; display: flex; justify-content: flex-end; flex: none;
  }
  .filter-btn { width: 17px; background: #f4f4f4; border: 1px solid #aaa; display: flex; align-items: center; justify-content: center; box-sizing: border-box; }
  .filter-combo.second { margin-left: 9px; justify-content: flex-start; align-items: center; padding-left: 3px; color: #888; }
  .tb3-icons { position: absolute; left: 482px; top: 6px; display: flex; gap: 6px; }

  .workspace { flex: 1; display: flex; min-height: 0; }

  .rail { width: 15px; flex: none; overflow: hidden; background: #aaa; border-right: 1px solid #8a8a8a; box-sizing: border-box; }
  .rail-cell { box-sizing: border-box; background: #d2d2d2; border-bottom: 1px solid #777; border-top: 1px solid #efefef; overflow: hidden; display: flex; align-items: center; }
  .rail-cell.dark { background: #a9a9a9; border-color: #8c8c8c; }
  .rail-cell.pale { background: #efefef; border-color: #d8d8d8; }
  .rail-ico { width: 24px; height: 24px; flex: none; margin-left: -9px; overflow: visible; }

  .panel { width: 338px; flex: none; background: #e8e8e8; display: flex; flex-direction: column; box-sizing: border-box; padding-left: 8px; min-height: 0; }
  .panel-title { height: 30px; flex: none; margin: 0; padding: 8px 0 0 4px; box-sizing: border-box; font: bold 12px/14px "Liberation Sans", "Noto Sans CJK SC", sans-serif; color: #222; }
  .table { width: 320px; height: 733px; flex: none; box-sizing: border-box; border: 1px solid #777; background: #fff; display: flex; flex-direction: column; }
  .thead { height: 21px; flex: none; box-sizing: border-box; padding: 4px 0 0 6px; background: linear-gradient(#fafafa, #e6e6e6); color: #333; border-bottom: 1px solid #ccc; }
  .tbody { flex: 1; position: relative; overflow: hidden; min-height: 0; }
  .trow { height: 20px; box-sizing: border-box; display: flex; align-items: center; border-bottom: 1px solid #e6e6e6; color: #4a4a4a; white-space: nowrap; }
  .trow:nth-child(even) { background: #f5f5f5; }
  .ti { flex: none; }
  .s16 { width: 16px; height: 16px; }
  .s10 { width: 10px; height: 17px; margin: 0 3px; }
  .mini { font: bold 6px "Liberation Sans", sans-serif; fill: #222; }
  .ttext { padding: 3px 3px 1px; }
  .ttext.tight { padding-left: 2px; }
  .ttext.sel { background: #0078d7; color: #fff; }
  .vline { position: absolute; left: 256px; top: 0; bottom: 0; width: 1px; background: #111; }
  .colline { position: absolute; left: 298px; top: 0; bottom: 0; width: 1px; background: #e4e4e4; }
  .tree-lines { position: absolute; left: 0; top: 0; pointer-events: none; }
  .minus { position: absolute; width: 7px; height: 7px; box-sizing: border-box; border: 1px solid #888; background: #fff; }
  .minus::after { content: ""; position: absolute; left: 1px; right: 1px; top: 2px; height: 1px; background: #333; }
  .m1 { left: 5px; top: 46px; }
  .m2 { left: 24px; top: 66px; }

  .hscroll { height: 17px; flex: none; background: #eeeeee; display: flex; align-items: center; position: relative; }
  .sarrow { width: 8px; height: 10px; position: absolute; left: 5px; }
  .sarrow.end { left: auto; right: 6px; }
  .thumb { position: absolute; left: 17px; top: 1px; bottom: 1px; width: 131px; background: #c8c8c8; }

  .splitter { display: flex; align-items: center; width: 320px; height: 12px; flex: none; gap: 4px; }
  .sline { flex: 1; height: 1px; background: #bcbcbc; }
  .sgrip { width: 57px; height: 6px; background: #d8d8d8; border: 1px solid #aaa; flex: none; box-sizing: border-box; }
  .dep {
    width: 320px; flex: 1; min-height: 0; overflow: hidden; box-sizing: border-box; background: linear-gradient(#f6f6f6, #dcdcdc); display: flex; justify-content: space-between;
    padding-left: 6px; color: #1d1d6a; border-top: 1px solid #fff;
  }
  .dep-text { margin-top: 3px; }
  .dep-btn { width: 23px; border-left: 1px solid #888; display: flex; align-items: center; justify-content: center; box-sizing: border-box; }

  .strip { width: 34px; flex: none; background: #cdcdcd; border-left: 1px solid #b8b8b8; box-sizing: border-box; display: flex; flex-direction: column; align-items: center; padding-top: 632px; overflow: hidden; }
  .strip-ctrl { width: 100%; height: 19px; flex: none; display: flex; justify-content: space-between; align-items: center; padding: 0 4px 0 5px; box-sizing: border-box; border-bottom: 1px solid #f0f0f0; }
  .mini-left { font-size: 9px; color: #111; }
  .dbl { width: 8px; height: 11px; }
  .strip-grip { width: 23px; height: 2px; flex: none; margin-top: 3px; background: repeating-linear-gradient(90deg, #999 0 2px, transparent 2px 4px); }
  .strip-ico { width: 24px; height: 24px; flex: none; margin-top: 6px; }

  .canvas { flex: 1; background: #000; position: relative; overflow: hidden; }
  .scene { display: block; }
  .axis-label text { font: 36px "Liberation Sans", sans-serif; }
  .triad { font: 36px "Liberation Sans", sans-serif; }
  .wm-latin { font: bold 132px "Liberation Sans", sans-serif; fill: #7c7c7c; }
  .wm-cjk { font: bold 114px "Noto Sans CJK SC", sans-serif; fill: #7c7c7c; }
  .wm-url { font: 38px "Liberation Sans", sans-serif; letter-spacing: 8px; fill: #7c7c7c; }

  .dialog {
    position: absolute; left: 157px; top: 52px; width: 328px; height: 695px; display: flex; flex-direction: column;
    border-radius: 7px 7px 0 0; overflow: hidden; box-sizing: border-box;
  }
  .dlg-title {
    height: 21px; flex: none; display: flex; align-items: center; position: relative; color: #fff;
    background: linear-gradient(#3a3a3a, #0c0c0c 40%, #000);
  }
  .gear { width: 14px; height: 14px; margin-left: 4px; }
  .dlg-name { margin-left: 11px; padding-top: 2px; font-weight: bold; font-size: 12px; }
  .dlg-title::before, .dlg-title::after { content: ""; position: absolute; top: 1px; bottom: 1px; width: 1px; background: #777; }
  .dlg-title::before { left: 21px; }
  .dlg-title::after { right: 20px; }
  .close { width: 12px; height: 12px; position: absolute; right: 4px; top: 5px; }
  .dlg-body { flex: 1; background: #e9e9e9; display: flex; flex-direction: column; border-left: 1px solid #666; border-right: 1px solid #666; box-sizing: border-box; min-height: 0; padding-top: 11px; }
  .dlg-bottom { height: 9px; flex: none; background: linear-gradient(#3a3a3a, #111); border-radius: 0 0 4px 4px; }

  .tabs { display: flex; flex: none; }
  .tabs.back { margin-left: 11px; height: 22px; }
  .tabs.front { margin-left: 9px; height: 23px; margin-top: -1px; position: relative; }
  .tab {
    display: flex; align-items: center; justify-content: center; box-sizing: border-box; color: #111;
    border: 1px solid #a6a6a6; border-radius: 4px 4px 0 0; background: linear-gradient(#f2f2f2, #cfcfcf); padding-top: 3px;
  }
  .t112 { width: 112px; margin-right: 2px; }
  .t94 { width: 94px; margin-right: 1px; }
  .t94b { width: 94px; }
  .t99 { width: 99px; margin-right: 1px; }
  .t92 { width: 92px; margin-right: 3px; margin-top: 1px; }
  .t110 { width: 110px; margin-top: 1px; }
  .tab.sel { background: linear-gradient(#fafafa, #e9e9e9); border-bottom: 0; position: relative; z-index: 1; height: 24px; padding-top: 0; }

  .tabpanel {
    width: 306px; margin-left: 9px; height: 559px; flex: none; box-sizing: border-box; border: 1px solid #a0a0a0;
    padding: 5px 6px 0 4px; display: flex; flex-direction: column; background: #ececec;
  }
  .sec-head {
    display: flex; justify-content: space-between; align-items: stretch; flex: none; box-sizing: border-box;
    background: linear-gradient(#fbfbfb, #dedede); border-bottom: 1px solid #8a8a8a; color: #1d1d6a; height: 22px;
  }
  .sec-head.first { height: 23px; }
  .sec-head.second { height: 21px; margin-top: 2px; }
  .sec-title { padding: 5px 0 0 6px; line-height: 14px; }
  .sec-btn { width: 22px; flex: none; display: flex; align-items: center; justify-content: center; border-left: 1px solid #c0c0c0; box-sizing: border-box; }
  .chev { width: 13px; height: 10px; }
  .sec-body { background: #d4d4d4; flex: none; box-sizing: border-box; padding: 5px 9px 0 8px; }
  .sec-body.first { height: 200px; }
  .sec-body.second { height: 218px; padding-top: 6px; }
  .sec-body.third { height: 41px; padding-top: 7px; }

  .row { display: flex; align-items: center; gap: 4px; }
  .r267 { height: 26.67px; }
  .r23 { height: 23px; }
  .r25 { height: 25px; }
  .r26 { height: 26px; }
  .r27 { height: 27px; }
  .r29 { height: 29px; }
  .lbl { color: #222; white-space: nowrap; padding-top: 2px; }
  .lbl.grow { flex: 1; }
  .check { width: 15px; height: 15px; box-sizing: border-box; border: 1px solid #777; border-radius: 3px; background: linear-gradient(#f0f0f0, #c6c6c6); margin-right: -1px; }

  .combo { height: 23px; box-sizing: border-box; background: #fff; border: 1px solid #8a8a8a; border-radius: 3px; display: flex; overflow: hidden; flex: none; box-shadow: 0 0 0 1px #e8e8e8; }
  .combo.wide { width: 139px; }
  .combo.u61 { width: 61px; }
  .combo-text { flex: 1; min-width: 0; padding-left: 3px; line-height: 23px; overflow: hidden; white-space: nowrap; color: #111; }
  .combo-text.mm { padding-left: 4px; font-size: 13px; letter-spacing: .3px; }
  .drop { width: 17px; flex: none; background: linear-gradient(#2a68c0, #5c9ee0 60%, #a6d4fa); display: flex; align-items: center; justify-content: center; }
  .drop-tri { width: 11px; height: 7px; }
  .num { position: relative; height: 21px; box-sizing: border-box; background: #fff; border: 1px solid #8a8a8a; border-radius: 3px; display: flex; justify-content: flex-end; overflow: hidden; flex: none; box-shadow: 0 0 0 1px #e8e8e8; }
  .num::after { content: ""; position: absolute; right: 0; top: 0; bottom: 0; width: 1px; background: #fff; }
  .num.w80 { width: 80px; }
  .num-text { font: 15px/19px "Liberation Mono", monospace; color: #222; margin-right: -6px; white-space: nowrap; }
  .lock { width: 22px; height: 22px; box-sizing: border-box; border: 1px solid #8a8a8a; border-radius: 3px; background: linear-gradient(#efefef, #c8c8c8); display: flex; align-items: center; justify-content: center; flex: none; }
  .lock-ico { width: 17px; height: 17px; }

  .footline { margin: 11px 6px 0; height: 1px; flex: none; background: #cfcfcf; border-bottom: 1px solid #fff; }
  .actions { display: flex; justify-content: flex-end; gap: 8px; padding-right: 16px; margin-top: 4px; flex: none; }
  .btn { width: 52px; height: 23px; box-sizing: border-box; border: 1px solid #888; border-radius: 4px; background: linear-gradient(#f0f0f0, #cfcfcf); display: flex; align-items: center; justify-content: center; color: #111; padding-top: 2px; }
  .btn.ok { width: 51px; border-color: #2e7a2e; background: linear-gradient(#cdeec4, #a4e08e 45%, #62c450); }
</style>
